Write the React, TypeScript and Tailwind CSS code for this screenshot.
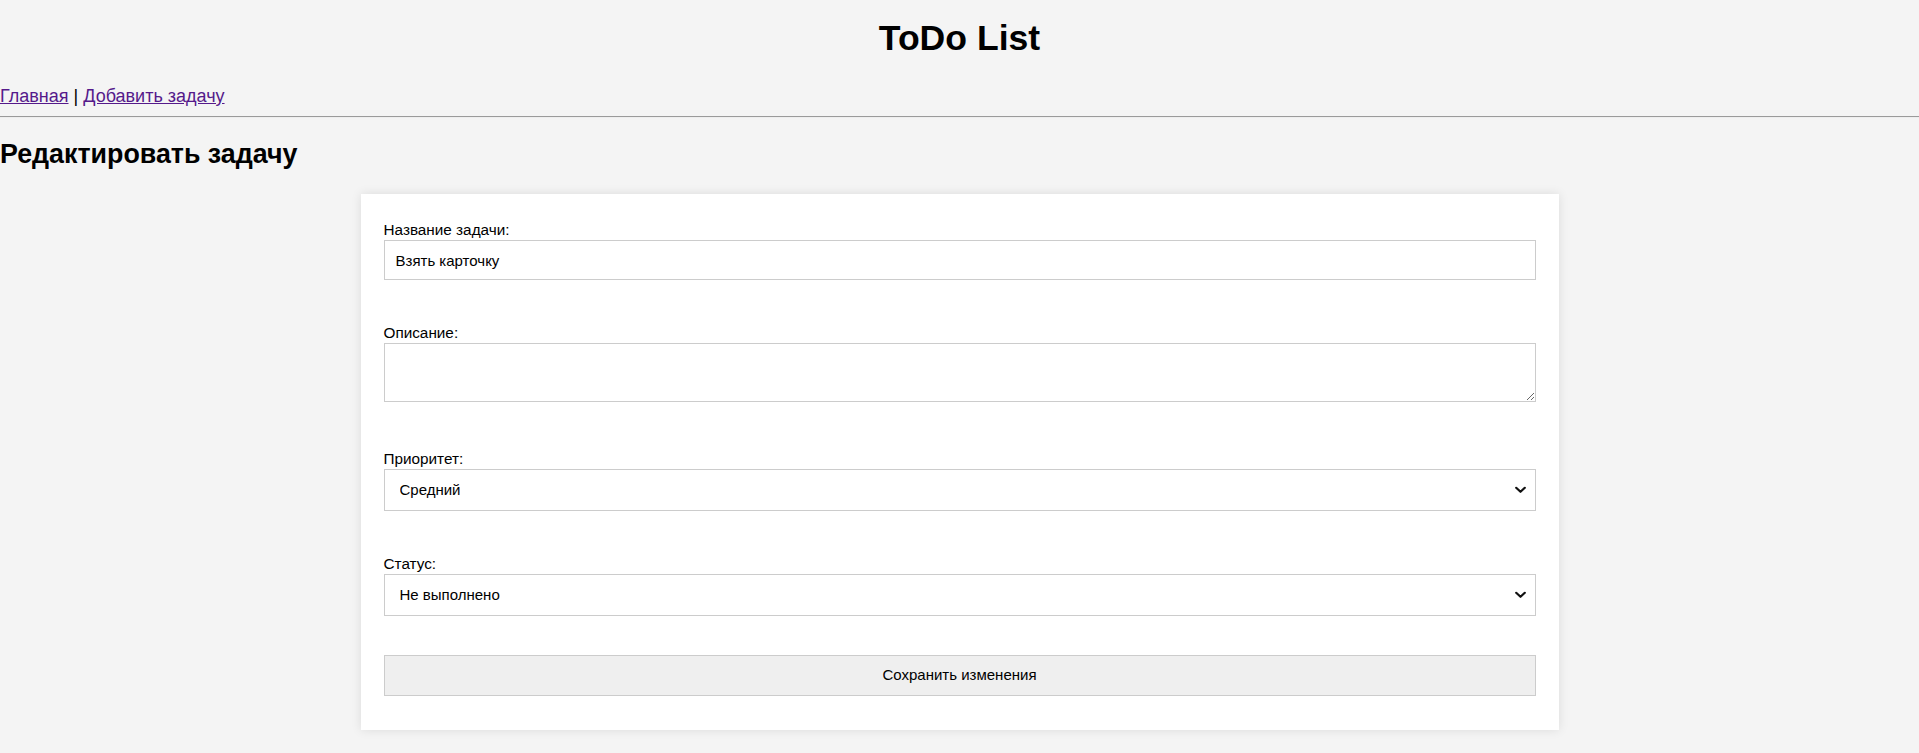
import React, { useState } from "react";

const Chevron = () => (
  <svg
    width="11"
    height="7"
    viewBox="0 0 11 7"
    className="pointer-events-none absolute right-[10px] top-1/2 -translate-y-1/2"
  >
    <polyline
      points="1.2,1.2 5.5,5.3 9.8,1.2"
      fill="none"
      stroke="#111"
      strokeWidth="2.2"
      strokeLinecap="round"
      strokeLinejoin="round"
    />
  </svg>
);

const App = () => {
  const [title, setTitle] = useState("Взять карточку");
  const [description, setDescription] = useState("");
  const [priority, setPriority] = useState("medium");
  const [status, setStatus] = useState("todo");

  return (
    <div className="min-h-screen bg-[#f4f4f4] font-['Liberation_Sans',Arial,sans-serif] text-[18px] text-black">
      <header className="pt-[18px]">
        <h1 className="text-center text-[35.6px] font-bold leading-[40px]">ToDo List</h1>
        <nav className="mt-[28px] leading-[20px]">
          <a href="#" className="text-[#551a8b] underline">
            Главная
          </a>{" "}
          |{" "}
          <a href="#" className="text-[#551a8b] underline">
            Добавить задачу
          </a>
        </nav>
        <hr className="mt-[10px] border-0 border-t border-b border-t-[#9a9a9a] border-b-[#eeeeee]" />
      </header>

      <main>
        <h2 className="mt-[21px] text-[26.8px] font-bold leading-[30px]">Редактировать задачу</h2>

        <form
          className="mx-auto mt-[25px] w-[1198px] bg-white px-[23px] pt-[27px] pb-[34px] text-[15px] shadow-[0_0_10px_rgba(0,0,0,0.1)]"
          onSubmit={(e) => e.preventDefault()}
        >
          <label htmlFor="title" className="mb-[2px] block text-[15.3px] leading-[17px]">
            Название задачи:
          </label>
          <input
            id="title"
            type="text"
            value={title}
            onChange={(e) => setTitle(e.target.value)}
            className="block h-[40px] w-full border border-[#cccccc] bg-white px-[11px] outline-none"
          />

          <label htmlFor="description" className="mt-[44px] mb-[2px] block text-[15.3px] leading-[17px]">
            Описание:
          </label>
          <textarea
            id="description"
            value={description}
            onChange={(e) => setDescription(e.target.value)}
            className="block h-[59px] w-full resize border border-[#cccccc] bg-white px-[11px] py-[10px] outline-none"
          />

          <label htmlFor="priority" className="mt-[48px] mb-[2px] block text-[15.3px] leading-[17px]">
            Приоритет:
          </label>
          <div className="relative">
            <select
              id="priority"
              value={priority}
              onChange={(e) => setPriority(e.target.value)}
              className="block h-[42px] w-full appearance-none border border-[#cccccc] bg-white pl-[15px] outline-none"
            >
              <option value="low">Низкий</option>
              <option value="medium">Средний</option>
              <option value="high">Высокий</option>
            </select>
            <Chevron />
          </div>

          <label htmlFor="status" className="mt-[44px] mb-[2px] block text-[15.3px] leading-[17px]">
            Статус:
          </label>
          <div className="relative">
            <select
              id="status"
              value={status}
              onChange={(e) => setStatus(e.target.value)}
              className="block h-[42px] w-full appearance-none border border-[#cccccc] bg-white pl-[15px] outline-none"
            >
              <option value="todo">Не выполнено</option>
              <option value="done">Выполнено</option>
            </select>
            <Chevron />
          </div>

          <button
            type="submit"
            className="mt-[39px] block h-[41px] w-full border border-[#cccccc] bg-[#efefef] text-center"
          >
            Сохранить изменения
          </button>
        </form>
      </main>
    </div>
  );
};

export default App;
